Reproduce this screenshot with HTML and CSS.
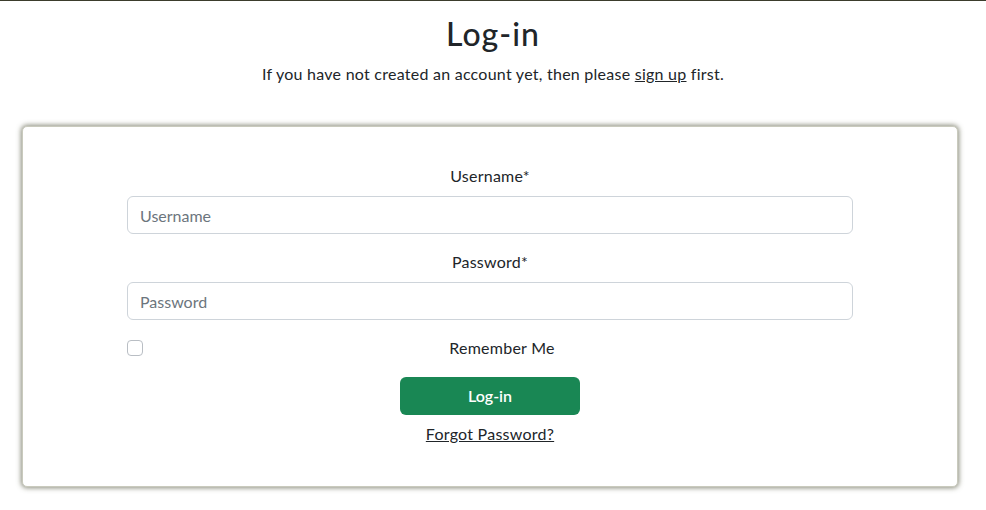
FILE: index.html
```html
<!DOCTYPE html>
<html lang="en">
<head>
<meta charset="utf-8">
<title>Log-in</title>
<link rel="stylesheet" href="styles.css">
</head>
<body>
<header class="page-head">
  <h1 class="title">Log-in</h1>
  <p class="lead">If you have not created an account yet, then please <a href="#" class="link">sign up</a> first.</p>
</header>
<main class="card">
  <form class="form">
    <div class="field">
      <label class="label" for="u">Username*</label>
      <input class="input" id="u" type="text" placeholder="Username">
    </div>
    <div class="field">
      <label class="label" for="p">Password*</label>
      <input class="input" id="p" type="password" placeholder="Password">
    </div>
    <div class="check">
      <input class="check-box" id="r" type="checkbox">
      <label class="check-label" for="r">Remember Me</label>
    </div>
    <div class="actions">
      <button class="btn" type="button">Log-in</button>
      <a href="#" class="link forgot">Forgot Password?</a>
    </div>
  </form>
</main>
</body>
</html>
```
FILE: styles.css
```css
* { box-sizing: border-box; }
html, body { margin: 0; padding: 0; background: #fff; }
body {
  border-top: 1px solid #3b3c2c;
  font-family: "Lato", "Open Sans", sans-serif;
  color: #212529;
  font-size: 16px;
  line-height: 24px;
  letter-spacing: 0.25px;
  padding-bottom: 16px;
}
.page-head { text-align: center; padding-top: 14px; }
.title {
  margin: 0;
  font-size: 32px;
  line-height: 38px;
  font-weight: 500;
  letter-spacing: 1px;
}
.lead { margin: 9px 0 0; font-size: 16px; }
.link { color: #212529; text-decoration: underline; }
.card {
  width: 936px;
  margin: 40px 0 0 22px;
  border: 1px solid #c9cabd;
  border-radius: 5px;
  background: #fff;
  box-shadow: 0 0 5px 1px rgba(90, 92, 70, 0.7);
  padding: 37px 0 40px;
}
.form { width: 726px; margin: 0 auto; }
.field { margin-bottom: 16px; text-align: center; }
.label { display: block; margin-bottom: 8px; }
.input {
  display: block;
  width: 100%;
  height: 38px;
  padding: 6px 12px;
  font: inherit;
  color: #212529;
  border: 1px solid #ced4da;
  border-radius: 6px;
  background: #fff;
}
.input::placeholder { color: #6c757d; }
.check {
  display: flex;
  align-items: center;
  margin-bottom: 17px;
}
.check-box {
  width: 16px;
  height: 16px;
  margin: 0 8px 0 0;
  appearance: none;
  border: 1px solid #b9bec4;
  border-radius: 4px;
  background: #fff;
}
.check-label { flex: 1; text-align: center; }
.actions { display: flex; flex-direction: column; align-items: center; gap: 7px; }
.btn {
  width: 180px;
  height: 38px;
  border: none;
  border-radius: 6px;
  background: #198754;
  color: #fff;
  font: inherit;
  font-weight: 600;
}
.forgot { line-height: 24px; }
```
